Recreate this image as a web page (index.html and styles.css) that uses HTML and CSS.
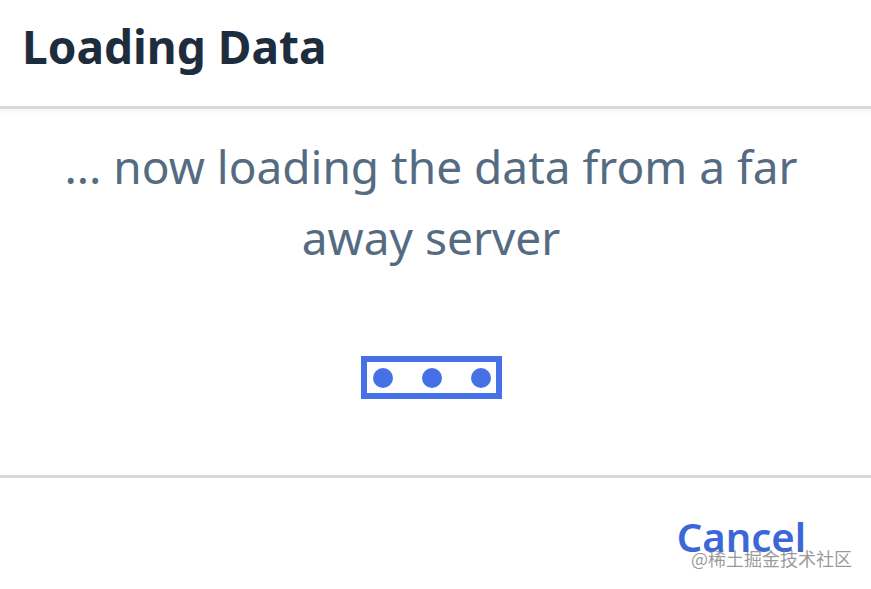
FILE: index.html
```html
<!DOCTYPE html>
<html lang="en">
<head>
  <meta charset="UTF-8" />
  <title>Loading Data</title>
  <link rel="stylesheet" href="styles.css">
</head>
<body>
  <div class="dialog">
    <header class="dialog-header">
      <h1>Loading Data</h1>
    </header>

    <section class="dialog-content">
      <p class="busy-text">... now loading the data from a far away server</p>
      <div class="busy-indicator">
        <span class="dot"></span>
        <span class="dot"></span>
        <span class="dot"></span>
      </div>
    </section>

    <footer class="dialog-footer">
      <button class="cancel-button">Cancel</button>
    </footer>

    <div class="watermark">@稀土掘金技术社区</div>
  </div>
</body>
</html>
```

FILE: styles.css
```css
html, body {
  margin: 0;
  height: 100%;
  background: #ffffff;
  font-family: 'Noto Sans', 'Open Sans', sans-serif;
}

.dialog {
  position: relative;
  height: 100vh;
  display: flex;
  flex-direction: column;
  overflow: hidden;
}

.dialog-header {
  height: 109px;
  box-sizing: border-box;
  padding: 15px 0 0 22px;
  border-bottom: 3px solid #d9d9d9;
}

.dialog-header h1 {
  margin: 0;
  font-size: 46px;
  line-height: normal;
  font-weight: 700;
  color: #1d2d3e;
}

.dialog-content {
  flex: 1;
  text-align: center;
  padding: 22px 9px 0 0;
  box-shadow: inset 0 8px 10px -8px rgba(0, 0, 0, 0.08);
}

.busy-text {
  margin: 0 auto;
  width: 780px;
  font-size: 46px;
  line-height: 71px;
  color: #556b82;
}

.busy-indicator {
  margin: 83px auto 0;
  width: 118px;
  border: 6px solid #4671e6;
  padding: 6px 5px 5px 6px;
  display: flex;
  justify-content: space-between;
}

.dot {
  width: 20px;
  height: 20px;
  border-radius: 50%;
  background: #4671e6;
}

.dialog-footer {
  height: 114px;
  box-sizing: border-box;
  border-top: 3px solid #d9d9d9;
  display: flex;
  justify-content: flex-end;
  align-items: flex-start;
  padding: 31px 61px 0 0;
}

.cancel-button {
  border: none;
  background: none;
  padding: 0 4px;
  font-family: 'Noto Sans', 'Open Sans', sans-serif;
  font-size: 40px;
  line-height: normal;
  font-weight: 600;
  color: #3b67d8;
  cursor: pointer;
}

.watermark {
  position: absolute;
  right: 19px;
  bottom: 18px;
  font-family: 'Noto Sans CJK SC', sans-serif;
  font-size: 18px;
  color: rgba(120, 120, 120, 0.75);
}
```
